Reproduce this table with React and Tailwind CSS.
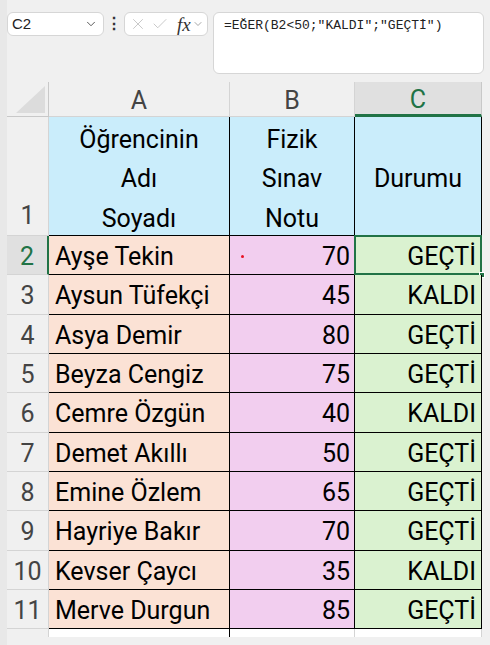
import { X, Check, ChevronDown } from 'lucide-react';

const data = [
  ['Ayşe Tekin', 70, 'GEÇTİ', 39],
  ['Aysun Tüfekçi', 45, 'KALDI', 40],
  ['Asya Demir', 80, 'GEÇTİ', 39],
  ['Beyza Cengiz', 75, 'GEÇTİ', 39],
  ['Cemre Özgün', 40, 'KALDI', 40],
  ['Demet Akıllı', 50, 'GEÇTİ', 39],
  ['Emine Özlem', 65, 'GEÇTİ', 39],
  ['Hayriye Bakır', 70, 'GEÇTİ', 40],
  ['Kevser Çaycı', 35, 'KALDI', 39],
  ['Merve Durgun', 85, 'GEÇTİ', 39],
];

const font = { fontFamily: 'Roboto, "Liberation Sans", sans-serif' };

function TopBar() {
  return (
    <div className="h-[82px] flex items-start pt-3">
      <div className="w-[97px] h-6 bg-white border border-[#d6d6d6] rounded-md flex items-center justify-between pl-[4px] pr-[5px] text-[15px] text-[#222]">
        <span>C2</span>
        <ChevronDown size={14} strokeWidth={1.5} className="text-[#444]" />
      </div>
      <div className="w-[20px] h-6 flex items-center justify-center text-[#333] text-[16px] font-bold">⋮</div>
      <div className="w-[84px] h-6 bg-white border border-[#d6d6d6] rounded-md flex items-center pl-[4px] text-[#bdbdbd]">
        <X size={18} strokeWidth={1.1} />
        <Check size={18} strokeWidth={1.1} className="ml-[4px]" />
        <span className="ml-[8px] text-[#333] italic text-[19px] leading-none" style={{ fontFamily: '"Liberation Serif", serif' }}>fx</span>
        <ChevronDown size={12} strokeWidth={1.5} className="ml-[1px] text-[#888]" />
      </div>
      <div className="ml-[5px] w-[271px] h-[62px] bg-white border border-[#d6d6d6] rounded-md pl-[10px] pt-[3px] text-[13px] text-[#222]" style={{ fontFamily: '"Liberation Mono", monospace' }}>
        =EĞER(B2&lt;50;"KALDI";"GEÇTİ")
      </div>
    </div>
  );
}

function Grid() {
  return (
    <div className="flex flex-col" style={font}>
      {/* column headers */}
      <div className="flex h-[35px]">
        <div className="w-[42px] bg-[#f0f0f0] border-r border-b border-[#c8c8c8] relative flex items-end justify-end p-[2px]">
          <svg width="31" height="29" viewBox="0 0 31 29"><polygon points="30,1 30,28 1,28" fill="#dcdcdc" /></svg>
        </div>
        <div className="w-[181px] bg-[#f0f0f0] border-r border-b border-[#d4d4d4] flex items-center justify-center pt-[3px] text-[25px] text-[#444]">A</div>
        <div className="w-[125px] bg-[#f0f0f0] border-r border-b border-[#d4d4d4] flex items-center justify-center pt-[3px] text-[25px] text-[#444]">B</div>
        <div className="w-[127px] bg-[#e0e0e0] border-r border-[#c8c8c8] border-b-[3px] border-b-[#217346] flex items-center justify-center pt-[4px] text-[25px] text-[#217346]">C</div>
      </div>
      {/* row 1 */}
      <div className="flex h-[119px]">
        <div className="w-[42px] bg-[#f0f0f0] border-r border-b border-[#d4d4d4] flex items-end justify-center leading-[39px] text-[25px] text-[#444]">1</div>
        <div className="w-[181px] bg-[#caedfb] border-r border-b border-black flex flex-col items-center justify-center pt-[6px] text-[25px] leading-[39.5px] text-black">
          <span>Öğrencinin</span>
          <span>Adı</span>
          <span>Soyadı</span>
        </div>
        <div className="w-[125px] bg-[#caedfb] border-r border-b border-black flex flex-col items-center justify-center pt-[6px] text-[25px] leading-[39.5px] text-black">
          <span>Fizik</span>
          <span>Sınav</span>
          <span>Notu</span>
        </div>
        <div className="w-[127px] bg-[#caedfb] border-r border-b border-black flex items-center justify-center pt-[5px] text-[25px] text-black">Durumu</div>
      </div>
      {data.map(([name, score, status, h], i) => {
        const sel = i === 0;
        return (
          <div key={i} className={'flex ' + (h === 40 ? 'h-[40px]' : 'h-[39px]')}>
            <div className={'w-[42px] border-b border-[#d4d4d4] flex items-center justify-center pt-[3px] text-[25px] ' + (sel ? 'bg-[#e0e0e0] text-[#217346] border-r-[2px] border-r-[#217346]' : 'bg-[#f0f0f0] text-[#444] border-r')}>{i + 2}</div>
            <div className="w-[181px] bg-[#fbe2d5] border-r border-b border-black flex items-center pl-[6px] pt-[3px] text-[25px] text-black">{name}</div>
            <div className="w-[125px] bg-[#f2ceef] border-r border-b border-black flex items-center justify-end pr-[4px] pt-[3px] text-[25px] text-black relative">
              {sel && <span className="absolute left-[11px] top-[19px] w-[3px] h-[3px] rounded-full bg-[#e81123]" />}
              {score}
            </div>
            <div className="w-[127px] bg-[#daf2d0] border-r border-b border-black flex items-center justify-end pr-[5px] pt-[3px] text-[25px] text-black relative">
              {status}
              {sel && (
                <>
                  <span className="absolute -left-[1px] -top-[1px] -right-[1px] -bottom-[1px] border-[2px] border-[#217346]" />
                  <span className="absolute -right-[4px] -bottom-[4px] w-[6px] h-[6px] bg-[#217346] border border-white" />
                </>
              )}
            </div>
          </div>
        );
      })}
      {/* partial row */}
      <div className="flex h-[8px]">
        <div className="w-[42px] bg-[#f0f0f0] border-r border-[#d4d4d4]" />
        <div className="w-[181px] bg-white border-r border-black" />
        <div className="w-[125px] bg-white border-r border-[#d4d4d4]" />
        <div className="w-[127px] bg-white border-r border-[#d4d4d4]" />
      </div>
    </div>
  );
}

export default function App() {
  return (
    <div className="w-[490px] h-[645px] overflow-hidden bg-[#f0f0f0] flex" style={{ fontFamily: '"Liberation Sans", Roboto, sans-serif' }}>
      <div className="w-[7px] shrink-0 bg-[#e8e8e8]" />
      <div className="flex flex-col">
        <TopBar />
        <Grid />
      </div>
    </div>
  );
}
